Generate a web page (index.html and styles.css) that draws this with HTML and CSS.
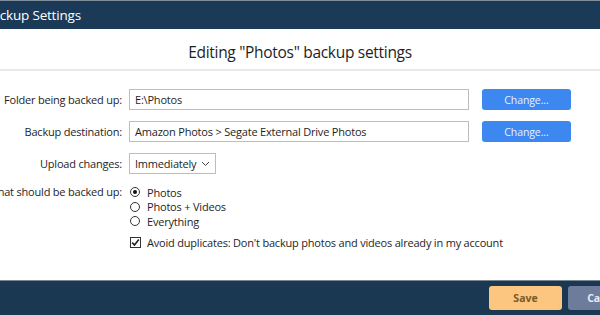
FILE: index.html
```html
<!DOCTYPE html>
<html>
<head>
<meta charset="utf-8">
<link rel="stylesheet" href="styles.css">
</head>
<body>
<div class="window">
  <div class="titlebar"><span class="title">Backup Settings</span></div>
  <div class="heading">Editing "Photos" backup settings</div>
  <div class="form">
    <div class="label">Folder being backed up:</div>
    <div class="field">E:\Photos</div>
    <button class="change">Change...</button>

    <div class="label">Backup destination:</div>
    <div class="field">Amazon Photos &gt; Segate External Drive Photos</div>
    <button class="change">Change...</button>

    <div class="label">Upload changes:</div>
    <div class="cell">
      <div class="select">Immediately
        <svg class="chev" width="9" height="6" viewBox="0 0 9 6"><path d="M1 1 L4.5 4.5 L8 1" fill="none" stroke="#444" stroke-width="1"/></svg>
      </div>
    </div>
    <div></div>

    <div class="label label-top">What should be backed up:</div>
    <div class="cell options">
      <div class="radios">
        <div class="opt"><span class="radio checked"></span>Photos</div>
        <div class="opt"><span class="radio"></span>Photos + Videos</div>
        <div class="opt"><span class="radio"></span>Everything</div>
      </div>
      <div class="opt check-row"><span class="checkbox"><svg width="9" height="9" viewBox="0 0 9 9"><path d="M1.2 4.6 L3.5 7 L7.8 1.6" fill="none" stroke="#222" stroke-width="1.6"/></svg></span>Avoid duplicates: Don't backup photos and videos already in my account</div>
    </div>
    <div></div>
  </div>
  <div class="footer">
    <button class="btn save">Save</button>
    <button class="btn cancel">Cancel</button>
  </div>
</div>
</body>
</html>
```
FILE: styles.css
```css
html, body {
  margin: 0;
  padding: 0;
}
body {
  width: 600px;
  height: 315px;
  overflow: hidden;
  background: #fff;
  font-family: "Open Sans", "Noto Sans", sans-serif;
  color: #1e1e1e;
}
.window {
  display: flex;
  flex-direction: column;
  height: 315px;
}
.titlebar {
  height: 28px;
  border-top: 1px solid #7e8c99;
  background: #1b3a57;
  color: #fff;
  font-size: 13.5px;
  letter-spacing: -0.2px;
  line-height: 28px;
  white-space: nowrap;
}
.title {
  margin-left: -16px;
}
.heading {
  height: 40px;
  line-height: 46px;
  text-align: center;
  font-size: 15.5px;
  letter-spacing: -0.3px;
  border-bottom: 2px solid #e9e9e9;
}
.form {
  flex: 1;
  display: grid;
  grid-template-columns: 122px 343px 92px;
  grid-auto-rows: 21px;
  column-gap: 7px;
  row-gap: 11px;
  padding-top: 18px;
  font-size: 11px;
  letter-spacing: -0.2px;
}
.label {
  display: flex;
  justify-content: flex-end;
  align-items: center;
  white-space: nowrap;
}
.label-top {
  align-items: flex-start;
  margin-top: -1px;
}
.field {
  width: 340px;
  box-sizing: border-box;
  border: 1px solid #bdbdbd;
  padding: 0 5px;
  line-height: 19px;
  white-space: nowrap;
}
.change {
  margin: 0 0 0 3px;
  padding: 0;
  border: none;
  border-radius: 3px;
  background: #3c87f0;
  color: #eaf2ff;
  font-family: inherit;
  font-size: 10.5px;
  letter-spacing: -0.1px;
}
.select {
  display: inline-flex;
  align-items: center;
  gap: 5px;
  height: 21px;
  box-sizing: border-box;
  border: 1px solid #bdbdbd;
  padding: 0 5px 0 5px;
}
.chev {
  margin-top: 1px;
}
.radios {
  display: flex;
  flex-direction: column;
}
.opt {
  display: flex;
  align-items: center;
  height: 14.5px;
  white-space: nowrap;
}
.radio {
  width: 10px;
  height: 10px;
  box-sizing: border-box;
  border: 1px solid #333;
  border-radius: 50%;
  margin: 0 7px 0 1px;
  display: flex;
  align-items: center;
  justify-content: center;
}
.radio.checked::after {
  content: "";
  width: 4px;
  height: 4px;
  border-radius: 50%;
  background: #111;
}
.check-row {
  margin-top: 7px;
}
.checkbox {
  width: 11px;
  height: 11px;
  box-sizing: border-box;
  border: 1px solid #333;
  margin: 0 6px 0 1px;
  display: flex;
  align-items: center;
  justify-content: center;
}
.footer {
  height: 34px;
  border-top: 1px solid #7a8895;
  background: #1a3852;
  display: flex;
  align-items: center;
  gap: 6px;
  padding-left: 489px;
  overflow: hidden;
}
.btn {
  flex: none;
  width: 73px;
  height: 24px;
  border: none;
  border-radius: 3px;
  font-family: inherit;
  font-weight: bold;
  font-size: 10.5px;
  padding: 0;
}
.save {
  background: #fcc680;
  color: #7a5a23;
}
.cancel {
  background: #6e7c9b;
  color: #e8ecf3;
}
```
